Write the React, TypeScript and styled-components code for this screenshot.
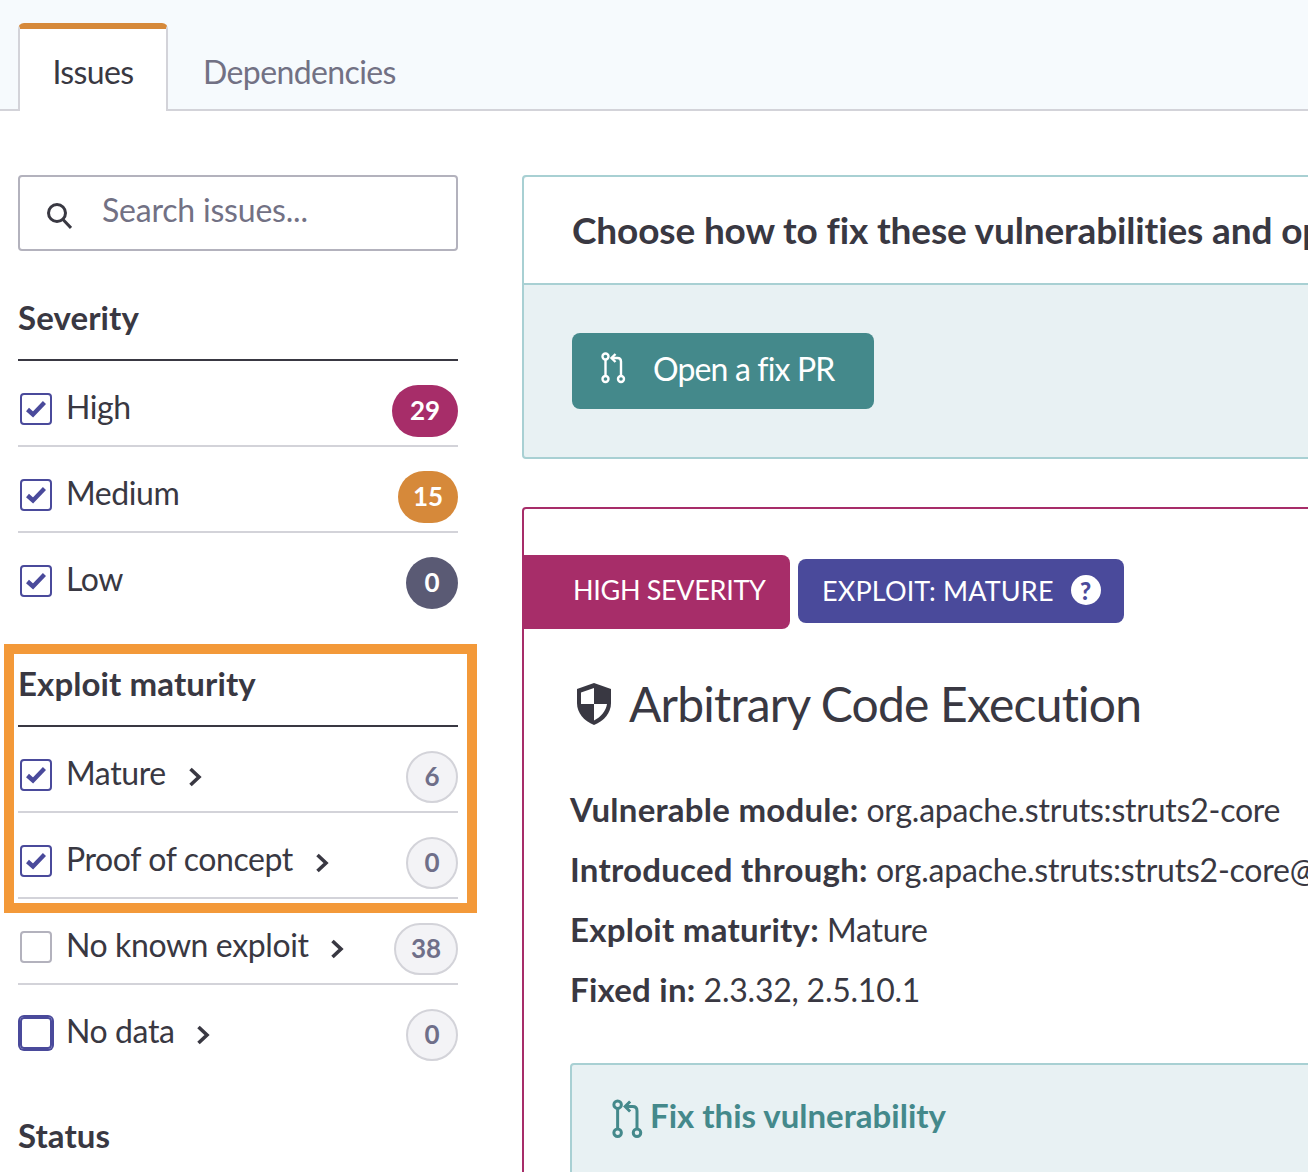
import React from "react";
import styled, { createGlobalStyle } from "styled-components";

const GlobalStyle = createGlobalStyle`
  html, body {
    margin: 0;
    padding: 0;
    background: #fff;
  }
  body {
    font-family: "Lato", "Open Sans", sans-serif;
    color: #393842;
    overflow: hidden;
  }
`;

const Page = styled.div`
  position: relative;
  width: 1308px;
  height: 1172px;
  overflow: hidden;
`;

const TabBar = styled.nav`
  display: flex;
  align-items: flex-end;
  height: 109px;
  padding-left: 18px;
  background: #f6fafd;
  border-bottom: 2px solid #d3d3d9;
`;

const ActiveTab = styled.div`
  box-sizing: border-box;
  width: 150px;
  height: 88px;
  margin-bottom: -2px;
  padding-top: 21px;
  text-align: center;
  font-size: 32px;
  line-height: 44px;
  letter-spacing: -0.6px;
  color: #393842;
  background: #fff;
  border: 2px solid #d3d3d9;
  border-top: 6px solid #d6893a;
  border-bottom: 0;
  border-radius: 6px 6px 0 0;
`;

const Tab = styled.div`
  height: 85px;
  padding: 26px 0 0 35px;
  box-sizing: border-box;
  font-size: 32px;
  line-height: 44px;
  letter-spacing: -0.6px;
  color: #727184;
`;

const Columns = styled.div`
  display: grid;
  grid-template-columns: 440px 900px;
  column-gap: 64px;
  padding: 64px 0 0 18px;
`;

const Sidebar = styled.aside`
  display: flex;
  flex-direction: column;
`;

const SearchBox = styled.label`
  box-sizing: border-box;
  display: flex;
  align-items: center;
  height: 76px;
  margin-bottom: 2px;
  padding-left: 26px;
  border: 2px solid #b3b2bd;
  border-radius: 4px;
`;

const SearchIcon = styled.svg`
  flex: none;
  width: 26px;
  height: 28px;
  margin-top: 6px;
`;

const SearchInput = styled.input`
  flex: 1;
  min-width: 0;
  margin: -8px 0 0 30px;
  padding: 0;
  border: 0;
  outline: 0;
  background: transparent;
  font: inherit;
  font-size: 32px;
  letter-spacing: -0.2px;

  &::placeholder {
    color: #727184;
    opacity: 1;
  }
`;

const FilterGroup = styled.section`
  margin-top: 40px;
`;

const GroupTitle = styled.h3`
  box-sizing: border-box;
  height: 68px;
  margin: 0;
  padding-top: 2px;
  font-size: 33px;
  line-height: 44px;
  font-weight: 700;
  letter-spacing: 0.1px;
  color: #393842;
  border-bottom: 2px solid #393842;
`;

const FilterRow = styled.div<{ $last?: boolean }>`
  display: flex;
  align-items: center;
  height: 86px;
  box-sizing: border-box;
  padding: 24px 0 8px;
  border-bottom: 2px solid ${(p) => (p.$last ? "transparent" : "#d3d3d9")};
`;

const CheckBox = styled.span<{ $state: "checked" | "empty" | "focus" }>`
  box-sizing: border-box;
  flex: none;
  display: flex;
  align-items: center;
  justify-content: center;
  width: 32px;
  height: 32px;
  margin: 0 14px 4px 2px;
  border: 2px solid ${(p) => (p.$state === "empty" ? "#b3b2bd" : "#4a4a9b")};
  border-radius: 4px;
  box-shadow: ${(p) => (p.$state === "focus" ? "0 0 0 2px #4a4a9b" : "none")};
`;

const RowLabel = styled.span`
  font-size: 32px;
  line-height: 44px;
  margin-bottom: 8px;
  letter-spacing: -0.4px;
  color: #393842;
`;

const RowChevron = styled.svg`
  flex: none;
  width: 14px;
  height: 20px;
  margin: 0 0 0 22px;
`;

const Count = styled.span<{ $bg: string; $width: number; $outlined?: boolean }>`
  box-sizing: border-box;
  flex: none;
  display: flex;
  align-items: center;
  justify-content: center;
  width: ${(p) => p.$width}px;
  height: 52px;
  margin-left: auto;
  padding-bottom: 3px;
  border-radius: 26px;
  font-size: 26px;
  font-weight: 700;
  background: ${(p) => p.$bg};
  color: ${(p) => (p.$outlined ? "#6f6f89" : "#fff")};
  border: ${(p) => (p.$outlined ? "2px solid #d3d3d9" : "0")};
`;

const Highlight = styled.div`
  position: absolute;
  left: 4px;
  top: 644px;
  box-sizing: border-box;
  width: 473px;
  height: 269px;
  border: 10px solid #f39939;
  pointer-events: none;
`;

const Main = styled.main`
  display: flex;
  flex-direction: column;
  gap: 48px;
`;

const FixCard = styled.section`
  box-sizing: border-box;
  height: 284px;
  border: 2px solid #a8d0d3;
  border-radius: 4px;
  background: #e8f1f3;
`;

const FixCardHeader = styled.header`
  box-sizing: border-box;
  height: 108px;
  padding: 30px 48px 0;
  background: #fff;
  border-bottom: 2px solid #a8d0d3;
  border-radius: 4px 4px 0 0;
  font-size: 37px;
  line-height: 46px;
  font-weight: 700;
  letter-spacing: -0.14px;
  white-space: nowrap;
`;

const FixCardBody = styled.div`
  padding: 48px;
`;

const PrButton = styled.button`
  display: flex;
  align-items: center;
  box-sizing: border-box;
  width: 302px;
  height: 76px;
  padding: 0 0 6px 29px;
  border: 0;
  border-radius: 8px;
  background: #44898b;
  color: #fff;
  font: inherit;
  font-size: 32px;
  letter-spacing: -0.85px;
`;

const PrIcon = styled.svg`
  flex: none;
  width: 24px;
  height: 32px;
  margin-right: 28px;
  overflow: visible;
`;

const IssueCard = styled.article`
  box-sizing: border-box;
  height: 800px;
  border: 2px solid #a72d69;
  border-radius: 4px;
  padding-top: 46px;
`;

const TagRow = styled.div`
  display: flex;
  align-items: center;
  gap: 8px;
  margin-left: -2px;
`;

const SeverityTag = styled.div`
  box-sizing: border-box;
  width: 268px;
  height: 74px;
  padding-left: 51px;
  line-height: 69px;
  font-size: 27px;
  letter-spacing: -0.33px;
  color: #fff;
  background: #a72d69;
  border-radius: 0 8px 8px 0;
`;

const ExploitTag = styled.div`
  box-sizing: border-box;
  display: flex;
  align-items: center;
  width: 326px;
  height: 64px;
  margin-bottom: 2px;
  padding: 0 0 2px 24px;
  font-size: 27px;
  letter-spacing: 0.15px;
  color: #fff;
  background: #4a4a9b;
  border-radius: 8px;
`;

const HelpDot = styled.span`
  display: flex;
  align-items: center;
  justify-content: center;
  width: 30px;
  height: 30px;
  margin-left: 17px;
  border-radius: 50%;
  background: #fff;
  color: #4a4a9b;
  font-size: 24px;
  font-weight: 900;
  letter-spacing: 0;
`;

const IssueTitle = styled.h1`
  display: flex;
  align-items: center;
  margin: 47px 0 0 52px;
  font-size: 48px;
  line-height: 56px;
  font-weight: 400;
  letter-spacing: -0.8px;
  color: #393842;
  white-space: nowrap;
`;

const ShieldIcon = styled.svg`
  flex: none;
  width: 36px;
  height: 44px;
  margin-right: 17px;
`;

const Details = styled.dl`
  margin: 47px 0 0 46px;
`;

const DetailLine = styled.div`
  height: 60px;
  font-size: 32px;
  line-height: 60px;
  white-space: nowrap;
`;

const DetailTerm = styled.dt`
  display: inline;
  font-size: 33px;
  font-weight: 700;
  letter-spacing: 0.25px;
`;

const DetailValue = styled.dd`
  display: inline;
  margin: 0 0 0 8px;
  letter-spacing: -0.23px;
`;

const RemedyBox = styled.div`
  margin: 44px 0 0 46px;
  height: 200px;
  padding: 30px 0 0 40px;
  border: 2px solid #a8d0d3;
  border-radius: 4px 0 0 4px;
  background: #e8f1f3;
  display: flex;
  align-items: flex-start;
`;

const RemedyTitle = styled.span`
  font-size: 33px;
  line-height: 40px;
  font-weight: 700;
  color: #44898b;
`;

const RemedyIcon = styled.svg`
  flex: none;
  width: 30px;
  height: 40px;
  margin: 4px 8px 0 0;
  overflow: visible;
`;

const Tick = () => (
  <svg width="20" height="18" viewBox="0 0 20 18">
    <path d="M1.5 9.5l5.5 5L18.5 2.5" fill="none" stroke="#4a4a9b" strokeWidth="4.4" />
  </svg>
);

const Chevron = () => (
  <RowChevron viewBox="0 0 14 20">
    <path d="M2.5 2L11 10l-8.5 8" fill="none" stroke="#393842" strokeWidth="3.6" />
  </RowChevron>
);

const PullRequestGlyph = ({ stroke }: { stroke: string }) => (
  <g fill="none" stroke={stroke} strokeWidth="2.4">
    <circle cx="4.5" cy="4.5" r="3" />
    <path d="M4.5 7.5v17" />
    <circle cx="4.5" cy="27" r="3" />
    <circle cx="20" cy="27" r="3" />
    <path d="M20 24V9.5Q20 6 16.5 6H11" />
    <path d="M14.5 2L10.5 6l4 4" />
  </g>
);

type Filter = {
  label: string;
  count: number;
  state: "checked" | "empty" | "focus";
  bg?: string;
  width?: number;
  chevron?: boolean;
};

const severity: Filter[] = [
  { label: "High", count: 29, state: "checked", bg: "#a72d69", width: 66 },
  { label: "Medium", count: 15, state: "checked", bg: "#d6893a", width: 60 },
  { label: "Low", count: 0, state: "checked", bg: "#5a5a74", width: 52 },
];

const maturity: Filter[] = [
  { label: "Mature", count: 6, state: "checked", width: 52, chevron: true },
  { label: "Proof of concept", count: 0, state: "checked", width: 52, chevron: true },
  { label: "No known exploit", count: 38, state: "empty", width: 64, chevron: true },
  { label: "No data", count: 0, state: "focus", width: 52, chevron: true },
];

const details = [
  ["Vulnerable module:", "org.apache.struts:struts2-core"],
  ["Introduced through:", "org.apache.struts:struts2-core@"],
  ["Exploit maturity:", "Mature"],
  ["Fixed in:", "2.3.32, 2.5.10.1"],
];

const FilterList = ({ filters }: { filters: Filter[] }) => (
  <>
    {filters.map((f, i) => (
      <FilterRow key={f.label} $last={i === filters.length - 1}>
        <CheckBox $state={f.state}>{f.state === "checked" && <Tick />}</CheckBox>
        <RowLabel>{f.label}</RowLabel>
        {f.chevron && <Chevron />}
        <Count $bg={f.bg ?? "#f3f3f6"} $width={f.width ?? 52} $outlined={!f.bg}>
          {f.count}
        </Count>
      </FilterRow>
    ))}
  </>
);

export default function App() {
  return (
    <Page>
      <GlobalStyle />
      <TabBar>
        <ActiveTab>Issues</ActiveTab>
        <Tab>Dependencies</Tab>
      </TabBar>
      <Columns>
        <Sidebar>
          <SearchBox>
            <SearchIcon viewBox="0 0 26 28">
              <circle cx="11" cy="11" r="8.5" fill="none" stroke="#393842" strokeWidth="3" />
              <path d="M17 17.5l8 8.5" fill="none" stroke="#393842" strokeWidth="3" />
            </SearchIcon>
            <SearchInput placeholder="Search issues..." readOnly />
          </SearchBox>
          <FilterGroup>
            <GroupTitle>Severity</GroupTitle>
            <FilterList filters={severity} />
          </FilterGroup>
          <FilterGroup>
            <GroupTitle>Exploit maturity</GroupTitle>
            <FilterList filters={maturity} />
          </FilterGroup>
          <FilterGroup>
            <GroupTitle>Status</GroupTitle>
          </FilterGroup>
        </Sidebar>
        <Main>
          <FixCard>
            <FixCardHeader>Choose how to fix these vulnerabilities and open</FixCardHeader>
            <FixCardBody>
              <PrButton>
                <PrIcon viewBox="0 0 24 32">
                  <PullRequestGlyph stroke="#fff" />
                </PrIcon>
                Open a fix PR
              </PrButton>
            </FixCardBody>
          </FixCard>
          <IssueCard>
            <TagRow>
              <SeverityTag>HIGH SEVERITY</SeverityTag>
              <ExploitTag>
                EXPLOIT: MATURE
                <HelpDot>?</HelpDot>
              </ExploitTag>
            </TagRow>
            <IssueTitle>
              <ShieldIcon viewBox="0 0 36 44">
                <path d="M18 1L35 7v14c0 10-7 18-17 22C8 39 1 31 1 21V7z" fill="#393842" />
                <path d="M18 6L5 10.5V22h13zM18 22v16.5C25 35 30 29 31 22z" fill="#fff" />
              </ShieldIcon>
              Arbitrary Code Execution
            </IssueTitle>
            <Details>
              {details.map(([term, value]) => (
                <DetailLine key={term}>
                  <DetailTerm>{term}</DetailTerm>
                  <DetailValue>{value}</DetailValue>
                </DetailLine>
              ))}
            </Details>
            <RemedyBox>
              <RemedyIcon viewBox="0 0 24 32">
                <PullRequestGlyph stroke="#44898b" />
              </RemedyIcon>
              <RemedyTitle>Fix this vulnerability</RemedyTitle>
            </RemedyBox>
          </IssueCard>
        </Main>
      </Columns>
      <Highlight />
    </Page>
  );
}
